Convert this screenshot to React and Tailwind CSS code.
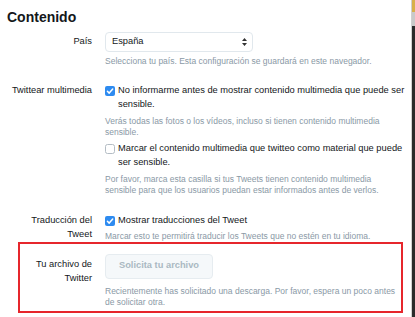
import React from 'react'

const Box = ({ checked }) => (
  <svg width="10" height="10" viewBox="0 0 10 10" className="mt-[2px] shrink-0">
    {checked ? (
      <>
        <rect x="0" y="0" width="10" height="10" rx="2" fill="#2e8bf0" />
        <path d="M2.4 5.3 L4.2 7.1 L7.7 3.1" stroke="#fff" strokeWidth="1.5" fill="none" strokeLinecap="round" strokeLinejoin="round" />
      </>
    ) : (
      <rect x="0.5" y="0.5" width="9" height="9" rx="2" fill="#fff" stroke="#b3bcc4" />
    )}
  </svg>
)

const Help = ({ children, className = '' }) => (
  <p className={`text-[8.5px] leading-[11px] text-[#8a99a6] ${className}`}>{children}</p>
)

const Option = ({ checked, children, className = '' }) => (
  <label className={`flex items-start gap-[3px] ${className}`}>
    <Box checked={checked} />
    <span>{children}</span>
  </label>
)

export default function App() {
  return (
    <div className="flex min-h-screen bg-white font-['Liberation_Sans',Arial,sans-serif] text-[9.3px] leading-[13.5px] text-[#14171a]">
      <div className="flex-1 pl-[6px] pr-[4px] pt-[7px]">
        <h2 className="pl-[1px] text-[14px] font-bold leading-[20px]">Contenido</h2>

        {/* País */}
        <div className="mt-[5px] flex">
          <div className="w-[86px] shrink-0 pt-[3px] text-right">País</div>
          <div className="ml-[13px] flex-1">
            <div className="flex h-[20px] w-[148px] items-center justify-between rounded-[4px] border border-[#e1e8ed] bg-white pl-[6px] pr-[5px]">
              <span>España</span>
              <svg width="5" height="8" viewBox="0 0 5 8">
                <path d="M2.5 0 L5 3 L0 3 Z M2.5 8 L5 5 L0 5 Z" fill="#333" />
              </svg>
            </div>
            <Help className="mt-[4px]">Selecciona tu país. Esta configuración se guardará en este navegador.</Help>
          </div>
        </div>

        {/* Twittear multimedia */}
        <div className="mt-[17px] flex">
          <div className="w-[86px] shrink-0 text-right">Twittear multimedia</div>
          <div className="ml-[13px] flex-1">
            <Option checked>No informarme antes de mostrar contenido multimedia que puede ser sensible.</Option>
            <Help className="mt-[5px]">Verás todas las fotos o los vídeos, incluso si tienen contenido multimedia sensible.</Help>
            <Option className="mt-[4px]">Marcar el contenido multimedia que twitteo como material que puede ser sensible.</Option>
            <Help className="mt-[5px] pr-[6px]">Por favor, marca esta casilla si tus Tweets tienen contenido multimedia sensible para que los usuarios puedan estar informados antes de verlos.</Help>
          </div>
        </div>

        {/* Traducción */}
        <div className="mt-[18px] flex">
          <div className="w-[86px] shrink-0 text-right">Traducción del Tweet</div>
          <div className="ml-[13px] flex-1">
            <Option checked>Mostrar traducciones del Tweet</Option>
            <Help className="mt-[3px]">Marcar esto te permitirá traducir los Tweets que no estén en tu idioma.</Help>
          </div>
        </div>

        {/* Archivo */}
        <div className="ml-[12px] mr-[4px] flex border-2 border-[#e6262c] pb-[3px] pt-[10px]">
          <div className="w-[72px] shrink-0 pt-[3px] leading-[14.5px] text-right">Tu archivo de Twitter</div>
          <div className="ml-[13px] flex-1">
            <button className="h-[25px] w-[108px] rounded-[4px] border border-[#e6ecf0] bg-[#f5f8fa] text-[9.3px] font-bold text-[#aab8c2]">
              Solicita tu archivo
            </button>
            <Help className="mt-[7px]">Recientemente has solicitado una descarga. Por favor, espera un poco antes de solicitar otra.</Help>
          </div>
        </div>
      </div>

      {/* borde derecho de la ventana */}
      <div className="flex w-[4px] flex-col border-l border-[#d0d0d0]">
        <div className="h-[12px] bg-[#d8b04a]" />
        <div className="h-[14px] bg-[#c9c9c9]" />
        <div className="flex-1 bg-[#2b2b2b]" />
      </div>
    </div>
  )
}
